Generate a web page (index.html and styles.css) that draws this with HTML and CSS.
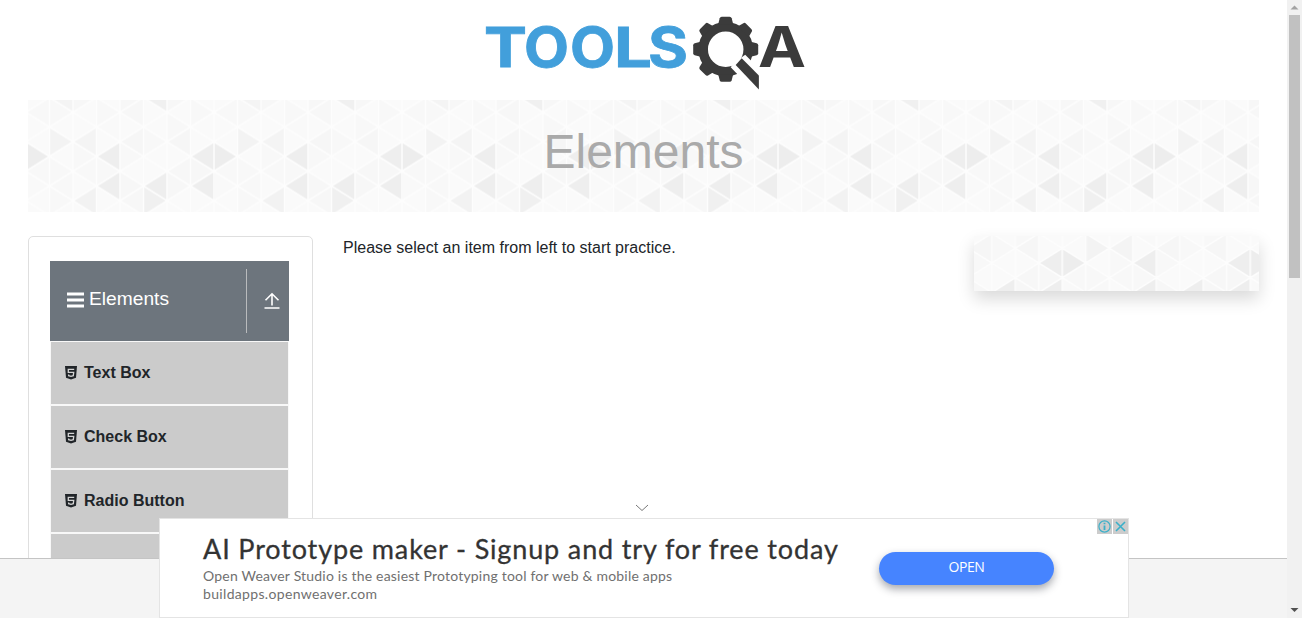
FILE: index.html
```html
<!DOCTYPE html>
<html lang="en">
<head>
<meta charset="utf-8">
<title>ToolsQA</title>
<link rel="stylesheet" href="styles.css">
</head>
<body>
<div class="window">
  <div class="page">
    <header class="top">
      <svg class="logo" viewBox="484 16 322 74" aria-label="Tools QA">
        <g class="logo-word">
          <text x="484" y="66.500" textLength="43" lengthAdjust="spacingAndGlyphs">T</text>
          <text x="524" y="66.500" textLength="45" lengthAdjust="spacingAndGlyphs">O</text>
          <text x="570" y="66.500" textLength="45" lengthAdjust="spacingAndGlyphs">O</text>
          <text x="614" y="66.500" textLength="38" lengthAdjust="spacingAndGlyphs">L</text>
          <text x="648" y="66.500" textLength="40" lengthAdjust="spacingAndGlyphs">S</text>
        </g>
        <g transform="translate(725.7 49.3)">
          <g class="gear">
            <circle r="22.500"/>
            <g id="teeth"></g>
          </g>
          <path class="gap" d="M9 13 19.500 5.500 42 28V46H32L5 18Z"/>
          <path class="handle" d="M16 9 33.200 26.300V40.300L10 15.700Z"/>
        </g>
        <text class="logo-a" x="758" y="66.500" textLength="48" lengthAdjust="spacingAndGlyphs">A</text>
      </svg>
    </header>

    <div class="banner">
      <svg class="triangles" aria-hidden="true">
        <defs><pattern id="tiles" width="188" height="118" patternUnits="userSpaceOnUse" x="-2" y="-2.500"></pattern></defs>
        <rect width="100%" height="100%" fill="url(#tiles)"/>
      </svg>
      <h1>Elements</h1>
    </div>

    <div class="columns">
      <nav class="menu">
        <div class="menu-head">
          <svg class="bars" viewBox="0 0 17 16"><path d="M0 2H17M0 8H17M0 14H17"/></svg>
          <span class="menu-title">Elements</span>
          <span class="collapse"><svg viewBox="0 0 16 18"><path d="M8 13.500V2M1.500 8.300 8 1.800l6.500 6.500M.500 16h15"/></svg></span>
        </div>
        <ul class="items">
          <li><svg class="html5" viewBox="0 0 12 14"><path d="M0 0H12L11 11.800 6 13.600 1 11.800Z"/><path class="five" d="M9.200 3.300H3.300V6.300H8.700L8.300 9.700 6 10.400 3.700 9.700 3.600 8.500"/></svg>Text Box</li>
          <li><svg class="html5" viewBox="0 0 12 14"><path d="M0 0H12L11 11.800 6 13.600 1 11.800Z"/><path class="five" d="M9.200 3.300H3.300V6.300H8.700L8.300 9.700 6 10.400 3.700 9.700 3.600 8.500"/></svg>Check Box</li>
          <li><svg class="html5" viewBox="0 0 12 14"><path d="M0 0H12L11 11.800 6 13.600 1 11.800Z"/><path class="five" d="M9.200 3.300H3.300V6.300H8.700L8.300 9.700 6 10.400 3.700 9.700 3.600 8.500"/></svg>Radio Button</li>
          <li></li>
        </ul>
      </nav>
      <p class="hint">Please select an item from left to start practice.</p>
      <aside class="side">
        <svg class="triangles" aria-hidden="true">
          <defs><pattern id="tiles-side" width="188" height="118" patternUnits="userSpaceOnUse" x="-99.700" y="-32"></pattern></defs>
          <rect width="100%" height="100%" fill="url(#tiles-side)"/>
        </svg>
      </aside>
    </div>
    <footer class="foot"></footer>
  </div>

  <div class="scrollbar">
    <svg viewBox="0 0 15 14"><path fill="#a3a3a3" d="M3.500 9.500h8L7.500 5.500z"/></svg>
    <div class="thumb"></div>
    <svg class="down" viewBox="0 0 15 14"><path fill="#505050" d="M3.500 4h8L7.500 8z"/></svg>
  </div>
</div>

<div class="ad-wrap">
  <svg class="caret" viewBox="0 0 14 8"><path d="M1 1 7 6.500 13 1"/></svg>
  <div class="ad">
    <div class="ad-copy">
      <div class="ad-title">AI Prototype maker - Signup and try for free today</div>
      <div class="ad-text">Open Weaver Studio is the easiest Prototyping tool for web &amp; mobile apps</div>
      <div class="ad-text ad-url">buildapps.openweaver.com</div>
    </div>
    <div class="ad-button">OPEN</div>
    <div class="ad-badges">
      <svg viewBox="0 0 15 15"><circle cx="7.500" cy="7.500" r="5.600"/><path d="M7.500 6.500V11M7.500 3.800V5.300" stroke-width="1.800"/></svg>
      <svg viewBox="0 0 15 15"><path d="M3 3 12 12M12 3 3 12" stroke-width="1.600"/></svg>
    </div>
  </div>
</div>
<script src="pattern.js"></script>
</body>
</html>
```
FILE: styles.css
```css
* { box-sizing: border-box; }
body {
  margin: 0;
  overflow: hidden;
  font-family: "Liberation Sans", Arial, sans-serif;
  font-size: 16px;
  line-height: 24px;
  color: #212529;
  background: #fff;
}
.window { display: flex; height: 618px; }
.page { flex: 1; height: 618px; overflow: hidden; display: flex; flex-direction: column; }
.top { height: 100px; flex: none; padding: 16px 0 0 484px; }
.logo { display: block; width: 322px; height: 74px; overflow: visible; }
.logo-word { font: 700 55px Inter, sans-serif; fill: #429fdb; stroke: #429fdb; stroke-width: .8; }
.logo-a { font: 700 56px Inter, sans-serif; fill: #3b3b3b; }
.gear circle { fill: none; stroke: #3b3b3b; stroke-width: 9.500; }
.gear path { fill: #3b3b3b; }
.gap { fill: #fff; }
.handle { fill: #3b3b3b; }

.banner { position: relative; flex: none; height: 112px; margin: 0 28px; }
.banner h1 {
  position: relative;
  margin: 0;
  padding-top: 23px;
  font-size: 48px;
  line-height: 58px;
  font-weight: 400;
  text-align: center;
  color: #aaa;
}
.triangles { position: absolute; inset: 0; width: 100%; height: 100%; }

.columns {
  flex: none;
  display: flex;
  align-items: flex-start;
  height: 346px;
  padding: 24px 28px 0;
  overflow: hidden;
}
.menu {
  width: 285px;
  height: 500px;
  padding: 24px 23px 0 21px;
  border: 1px solid #dfdfdf;
  border-radius: 5px;
}
.menu-head {
  display: flex;
  align-items: center;
  width: 239px;
  height: 80px;
  padding-left: 17px;
  color: #fff;
  background: #6d757d;
}
.bars { width: 17px; height: 16px; margin-top: -3px; }
.bars path { stroke: #fff; stroke-width: 2.900; }
.menu-title { margin: -4px 0 0 5px; font-size: 19.200px; }
.collapse {
  display: flex;
  align-items: center;
  justify-content: center;
  width: 43px;
  height: 64px;
  margin-left: auto;
  padding: 0 0 0 7px;
  border-left: 1px solid #b9bbbd;
}
.collapse svg { width: 16px; height: 18px; }
.collapse path { fill: none; stroke: #fff; stroke-width: 1.600; }
.items { list-style: none; margin: 0; padding: 1px; width: 239px; display: grid; gap: 2px; background: #f8f8f8; }
.items li {
  display: flex;
  align-items: center;
  height: 62px;
  padding: 0 0 1px 14px;
  font-weight: 700;
  background: #cbcbcb;
}
.html5 { width: 12px; height: 14px; margin: 1px 7px 0 0; fill: #212529; }
.html5 .five { fill: none; stroke: #d4d4d4; stroke-width: 1.300; }
.hint { margin: 0 0 0 30px; white-space: nowrap; }
.side {
  position: relative;
  width: 285px;
  height: 55px;
  margin-left: auto;
  box-shadow: 0 8px 16px rgba(0, 0, 0, .15);
}
.foot { flex: 1; border-top: 1px solid #c4c4c4; background: #f4f4f4; }

.scrollbar { width: 15px; flex: none; display: flex; flex-direction: column; background: #f1f1f1; }
.scrollbar svg { width: 15px; height: 14px; }
.scrollbar .down { margin-top: auto; }
.thumb { width: 11px; height: 263px; margin: 1px 2px 0; background: #c1c1c1; }

.ad-wrap { position: absolute; left: 159px; bottom: 0; width: 970px; }
.caret { display: block; width: 14px; height: 8px; margin: 0 0 6px 476px; }
.caret path { fill: none; stroke: #777; stroke-width: 1; }
.ad {
  position: relative;
  display: flex;
  height: 100px;
  border: 1px solid #e4e4e4;
  background: #fff;
}
.ad-copy { width: 719px; padding: 12px 0 0 43px; font-family: Lato, sans-serif; white-space: nowrap; }
.ad-title { font-size: 27px; line-height: 36px; color: #333; -webkit-text-stroke: .3px #333; letter-spacing: .86px; }
.ad-text { font-size: 14px; line-height: 18px; color: #707070; letter-spacing: .2px; }
.ad-url { letter-spacing: .33px; }
.ad-button {
  width: 175px;
  height: 33px;
  margin-top: 33px;
  border-radius: 17px;
  font: 14px/30px "Open Sans", sans-serif;
  letter-spacing: -.4px;
  text-align: center;
  color: #fff;
  background: #4684ff;
  box-shadow: 0 4px 9px rgba(30, 35, 50, .4);
}
.ad-badges { position: absolute; top: 0; right: 0; display: flex; gap: 1px; }
.ad-badges svg { width: 15px; height: 15px; background: #ccc; fill: none; stroke: #3bb0c9; stroke-width: 1.200; }
```
FILE: pattern.js
```js
const NS = "http://www.w3.org/2000/svg";
const W = 23.5, H = 29.5;

// [column, direction, half-row, shade]
const shades = [
  [0, "R", 4, "#ededed"], [1, "R", 3, "#f3f3f3"], [1, "L", 0, "#f4f4f4"],
  [2, "L", 3, "#f4f4f4"], [2, "L", 7, "#f2f2f2"], [3, "L", 4, "#eeeeee"],
  [3, "L", 6, "#eeeeee"], [5, "L", 6, "#eeeeee"], [5, "R", 7, "#f0f0f0"],
  [5, "L", 0, "#f0f0f0"], [7, "L", 4, "#eeeeee"], [7, "L", 6, "#eeeeee"],
  [0, "L", 1, "#f8f8f8"], [0, "L", 5, "#f8f8f8"], [1, "R", 1, "#f8f8f8"],
  [1, "R", 5, "#f8f8f8"], [1, "L", 6, "#f8f8f8"], [1, "R", 7, "#f8f8f8"],
  [2, "R", 0, "#f7f7f7"], [2, "R", 4, "#f8f8f8"], [3, "L", 2, "#f9f9f9"],
  [3, "R", 1, "#f8f8f8"], [3, "R", 5, "#f8f8f8"], [4, "L", 3, "#f6f6f6"],
  [4, "R", 0, "#f7f7f7"], [4, "R", 4, "#f8f8f8"], [4, "L", 1, "#f7f7f7"],
  [4, "R", 6, "#f7f7f7"], [5, "R", 3, "#f8f8f8"], [6, "L", 3, "#f6f6f6"],
  [6, "R", 2, "#f8f8f8"], [6, "L", 5, "#f7f7f7"], [6, "R", 0, "#f7f7f7"],
  [6, "R", 6, "#f7f7f7"], [7, "R", 1, "#f8f8f8"], [7, "R", 5, "#f7f7f7"],
  [0, "R", 6, "#f9f9f9"], [2, "L", 5, "#f8f8f8"], [4, "L", 7, "#f7f7f7"]
];

function add(parent, d, attrs) {
  const p = document.createElementNS(NS, "path");
  p.setAttribute("d", d);
  for (const key in attrs) p.setAttribute(key, attrs[key]);
  parent.appendChild(p);
}

document.querySelectorAll("pattern").forEach(pattern => {
  add(pattern, "M0 0H188V118H0Z", { fill: "#fafafa" });
  for (const [c, dir, row, fill] of shades) {
    const x = dir === "R" ? c * W : (c + 1) * W;
    const dx = dir === "R" ? W : -W;
    add(pattern, `M${x} ${(row - 1) * H / 2}l${dx} ${H / 2}l${-dx} ${H / 2}z`, { fill });
  }
  let lines = "";
  for (let c = 0; c <= 8; c++) lines += `M${c * W} 0V118`;
  for (let k = -5; k <= 9; k++) {
    const y = H / 2 + k * H;
    lines += `M0 ${y}l188 118M0 ${y}l188 -118`;
  }
  add(pattern, lines, { fill: "none", stroke: "#fdfdfd", "stroke-width": 1.5 });
});

for (let a = 0; a < 360; a += 45) {
  add(document.getElementById("teeth"), "M-7.500 -25 -6 -31Q-5.500 -32.500 -4 -32.500H4Q5.500 -32.500 6 -31L7.500 -25Z", { transform: `rotate(${a})` });
}
```
